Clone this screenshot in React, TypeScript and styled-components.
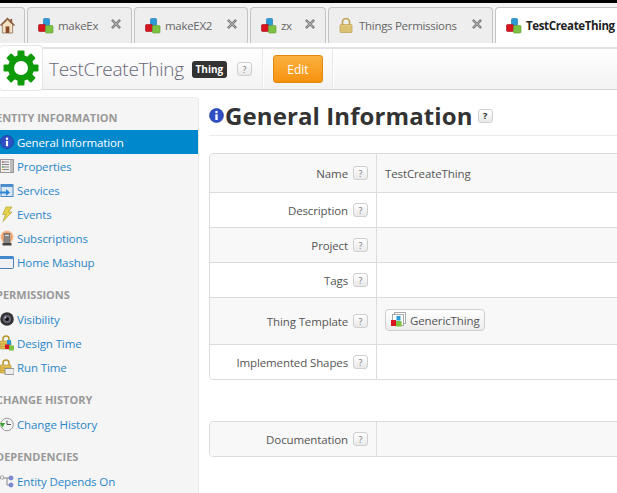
import React from "react";
import styled, { createGlobalStyle } from "styled-components";

const GlobalStyle = createGlobalStyle`
  html, body {
    margin: 0;
    padding: 0;
    background: #fff;
  }
`;

const Page = styled.div`
  width: 617px;
  height: 493px;
  overflow: hidden;
  display: flex;
  flex-direction: column;
  background: #fff;
  font-family: "Open Sans", "Noto Sans", sans-serif;
  font-size: 11.5px;
  color: #444;
`;

const TabBar = styled.div`
  flex: none;
  display: flex;
  gap: 2px;
  height: 36px;
  padding-top: 7px;
  background: linear-gradient(#000 0, #000 3px, #f4f4f4 3px);
`;

const Tab = styled.div<{ $active?: boolean; $width: number }>`
  flex: none;
  box-sizing: border-box;
  width: ${(p) => p.$width}px;
  height: 36px;
  display: flex;
  align-items: center;
  gap: 4px;
  padding: 0 10px 0 10px;
  border: 1px solid #c4c4c4;
  border-bottom: none;
  border-radius: 4px 4px 0 0;
  background: ${(p) => (p.$active ? "#fff" : "#eeeeee")};
  color: ${(p) => (p.$active ? "#222" : "#666")};
  font-weight: ${(p) => (p.$active ? 700 : 400)};
  font-size: 11.5px;
  letter-spacing: ${(p) => (p.$active ? "-0.35px" : "-0.3px")};
  white-space: nowrap;
`;

const HomeTab = styled(Tab)`
  margin-left: -6px;
  padding: 0 0 0 5px;
`;

const TabLabel = styled.span`
  flex: 1;
`;

const CloseMark = styled.span`
  flex: none;
  display: flex;
  margin-top: -3px;
`;

const Toolbar = styled.div`
  flex: none;
  display: flex;
  align-items: center;
  box-sizing: border-box;
  height: 43px;
  margin-top: 4px;
  border-top: 2px solid #e2e2e2;
  border-bottom: 1px solid #d8d8d8;
  background: linear-gradient(#fff, #f2f2f2);
`;

const GearBox = styled.div`
  flex: none;
  box-sizing: border-box;
  width: 44px;
  height: 46px;
  margin: -2px 6px 0 -1px;
  display: flex;
  align-items: center;
  justify-content: center;
  background: #fff;
  border: 1px solid #e6e6e6;
  border-radius: 4px;
`;

const EntityTitle = styled.div`
  font-size: 19px;
  font-weight: 300;
  color: #667;
  letter-spacing: -0.25px;
  white-space: nowrap;
`;

const TypeBadge = styled.div`
  margin-left: 8px;
  width: 35px;
  height: 17px;
  display: flex;
  align-items: center;
  justify-content: center;
  border-radius: 3px;
  background: #333;
  color: #fff;
  font-size: 10px;
  font-weight: 700;
`;

const HelpButton = styled.span<{ $dark?: boolean }>`
  flex: none;
  box-sizing: border-box;
  width: 15px;
  height: 14px;
  display: inline-flex;
  align-items: center;
  justify-content: center;
  border: 1px solid #cfcfcf;
  border-radius: 3px;
  background: linear-gradient(#fff, #e9e9e9);
  color: ${(p) => (p.$dark ? "#222" : "#777")};
  font-size: 9px;
  font-weight: ${(p) => (p.$dark ? 700 : 400)};
  line-height: 1;
`;

const ToolbarHelp = styled(HelpButton)`
  margin-left: 10px;
`;

const ToolbarDivider = styled.div`
  align-self: stretch;
  width: 1px;
  background: #e8e8e8;
  border-right: 1px solid #fff;
`;

const FirstDivider = styled(ToolbarDivider)`
  margin-left: 10px;
`;

const EditButton = styled.div`
  box-sizing: border-box;
  width: 50px;
  height: 28px;
  margin: 0 9px;
  display: flex;
  align-items: center;
  justify-content: center;
  border: 1px solid #e08a10;
  border-radius: 3px;
  background: linear-gradient(#fbb040, #f7920f);
  color: #fff;
  font-size: 12px;
`;

const Main = styled.div`
  flex: 1;
  min-height: 0;
  display: flex;
  margin-top: 7px;
`;

const Sidebar = styled.nav`
  flex: none;
  box-sizing: border-box;
  width: 199px;
  padding-top: 12px;
  background: #f5f5f5;
  border-top: 1px solid #ececec;
  border-right: 1px solid #e8e8e8;
  border-radius: 0 4px 0 0;
`;

const SectionTitle = styled.div`
  height: 16px;
  margin: 0 0 4px -4px;
  line-height: 16px;
  color: #999;
  font-size: 11px;
  font-weight: 700;
  white-space: nowrap;
`;

const NavGroup = styled.div`
  margin-bottom: 13px;
`;

const NavItem = styled.div<{ $selected?: boolean }>`
  height: 24px;
  display: flex;
  align-items: center;
  gap: 3px;
  background: ${(p) => (p.$selected ? "#0088cc" : "transparent")};
  color: ${(p) => (p.$selected ? "#fff" : "#2a86c8")};
  font-size: 11.5px;
  letter-spacing: -0.12px;
  white-space: nowrap;
`;

const NavIcon = styled.span`
  flex: none;
  width: 14px;
  height: 16px;
  display: flex;
  align-items: center;
  justify-content: flex-end;
  overflow: hidden;
`;

const Content = styled.section`
  flex: 1;
  min-width: 0;
  padding-left: 10px;
  overflow: hidden;
`;

const Heading = styled.div`
  box-sizing: border-box;
  height: 39px;
  display: flex;
  align-items: center;
  padding-bottom: 1px;
  border-bottom: 1px solid #eaeaea;
`;

const HeadingText = styled.h1`
  margin: 0 5px 0 1px;
  color: #333;
  font-size: 24px;
  font-weight: 700;
  letter-spacing: 0.1px;
  white-space: nowrap;
`;

const InfoTable = styled.div<{ $top: number }>`
  width: 440px;
  margin-top: ${(p) => p.$top}px;
  border: 1px solid #dcdcdc;
  border-radius: 4px;
  overflow: hidden;
`;

const Row = styled.div<{ $height: number; $shaded?: boolean }>`
  box-sizing: border-box;
  height: ${(p) => p.$height}px;
  display: flex;
  background: ${(p) => (p.$shaded ? "#f8f8f8" : "#fff")};
  border-bottom: 1px solid #dcdcdc;

  &:last-child {
    border-bottom: none;
  }
`;

const LabelCell = styled.div`
  flex: none;
  box-sizing: border-box;
  width: 167px;
  display: flex;
  align-items: center;
  justify-content: flex-end;
  gap: 5px;
  padding-right: 8px;
  border-right: 1px solid #dcdcdc;
  color: #555;
  letter-spacing: -0.12px;
  white-space: nowrap;
`;

const ValueCell = styled.div`
  flex: 1;
  display: flex;
  align-items: center;
  padding-left: 8px;
  color: #555;
  letter-spacing: -0.12px;
`;

const TemplateLink = styled.div`
  box-sizing: border-box;
  height: 22px;
  display: flex;
  align-items: center;
  gap: 4px;
  margin-top: -2px;
  padding: 0 4px;
  border: 1px solid #cfcfcf;
  border-radius: 4px;
  background: linear-gradient(#fff, #ececec);
  color: #555;
`;

const Cubes = ({ size = 16 }: { size?: number }) => (
  <svg width={size} height={size} viewBox="0 0 16 16">
    <rect x="5.5" y="0.5" width="6" height="7" rx="1" fill="#2a9bd8" stroke="#1a6fa8" strokeWidth="0.6" />
    <rect x="0.5" y="6.5" width="7" height="7" rx="1" fill="#d8141f" stroke="#a00c14" strokeWidth="0.6" />
    <rect x="7.5" y="7.5" width="7.5" height="7.5" rx="1" fill="#7cc242" stroke="#5a9a2c" strokeWidth="0.6" />
  </svg>
);

const CloseIcon = () => (
  <svg width="10" height="10" viewBox="0 0 11 11">
    <path d="M2 2 L9 9 M9 2 L2 9" stroke="#808080" strokeWidth="2.8" strokeLinecap="square" />
    <path d="M2 2 L9 9 M9 2 L2 9" stroke="#b4b4b4" strokeWidth="1" />
  </svg>
);

const HomeIcon = () => (
  <svg width="15" height="17" viewBox="0 0 16 18">
    <path d="M2.5 8 L8 3 L13.5 8 V17 H2.5 Z" fill="#f2e2c4" stroke="#8a6a48" strokeWidth="0.8" />
    <path d="M0.5 9 L8 1.5 L15.5 9" fill="none" stroke="#8c5a3a" strokeWidth="1.6" />
    <rect x="6" y="10" width="4" height="7" fill="#8a4a2a" />
    <rect x="11" y="2" width="2" height="4" fill="#8c5a3a" />
  </svg>
);

const LockIcon = () => (
  <svg width="16" height="15" viewBox="0 0 14 15" preserveAspectRatio="xMinYMid meet">
    <path d="M3.5 7 V4 a3.5 3.5 0 0 1 7 0 V7" fill="none" stroke="#c0a050" strokeWidth="1.6" />
    <rect x="1" y="6.5" width="12" height="8" rx="1" fill="#e6cd80" stroke="#b8994a" strokeWidth="0.7" />
    <path d="M1.5 9 H12.5 M1.5 11 H12.5 M1.5 13 H12.5" stroke="#c8ac5c" strokeWidth="0.7" />
  </svg>
);

const GearIcon = () => (
  <svg width="36" height="36" viewBox="0 0 36 36">
    <g fill="#0f9a0a">
      {[0, 45, 90, 135, 180, 225, 270, 315].map((deg) => (
        <rect key={deg} x="14.5" y="0.5" width="7" height="9" rx="1" transform={`rotate(${deg} 18 18)`} />
      ))}
      <circle cx="18" cy="18" r="13" />
    </g>
    <circle cx="18" cy="18" r="7" fill="#fff" />
  </svg>
);

const InfoIcon = ({ size = 14 }: { size?: number }) => (
  <svg width={size} height={size} viewBox="0 0 14 14">
    <circle cx="7" cy="7" r="6.5" fill="#2f4fc4" stroke="#1f3590" strokeWidth="0.6" />
    <circle cx="7" cy="3.8" r="1.2" fill="#fff" />
    <rect x="5.9" y="5.8" width="2.2" height="5.4" fill="#fff" />
  </svg>
);

const PropertiesIcon = () => (
  <svg width="14" height="15" viewBox="0 0 14 15">
    <rect x="0.5" y="0.5" width="13" height="13" fill="#eee" stroke="#999" />
    <rect x="10" y="1" width="3" height="12" fill="#bbb" />
    <path d="M2 3 H9 M2 5.5 H9 M2 8 H9 M2 10.5 H9" stroke="#888" />
    <path d="M2 3 H3.5" stroke="#c33" />
    <path d="M2 8 H3.5" stroke="#3a3" />
    <path d="M2 10.5 H3.5" stroke="#e90" />
  </svg>
);

const ServicesIcon = () => (
  <svg width="14" height="15" viewBox="0 0 14 15">
    <rect x="1" y="1.5" width="12" height="12" fill="#dce9f5" stroke="#4a86c0" />
    <rect x="1" y="1.5" width="12" height="2.5" fill="#4a90d0" />
    <path d="M0 8.5 H6 V6 L10 9.5 L6 13 V10.5 H0 Z" fill="#2f86d6" />
  </svg>
);

const EventsIcon = () => (
  <svg width="14" height="16" viewBox="0 0 14 16">
    <path d="M6 1 H12 L8.5 6 H12 L3 15.5 L5.5 8.5 H2.5 Z" fill="#e6d24a" stroke="#a89a30" strokeWidth="0.6" />
  </svg>
);

const SubscriptionsIcon = () => (
  <svg width="14" height="16" viewBox="0 0 14 16">
    <circle cx="7" cy="7" r="6.5" fill="#f6b888" />
    <circle cx="7" cy="7" r="4.5" fill="#f8d0a8" stroke="#ee9a5a" />
    <rect x="4" y="3.5" width="6" height="10" fill="#888" stroke="#555" strokeWidth="0.5" />
    <rect x="5" y="5" width="4" height="1" fill="#ddd" />
    <rect x="2.5" y="13" width="9" height="2.5" fill="#444" />
  </svg>
);

const MashupIcon = () => (
  <svg width="14" height="13" viewBox="0 0 14 13">
    <rect x="-2" y="0.5" width="15.5" height="12" rx="1" fill="#eef0f4" stroke="#4a80b8" />
    <rect x="-2" y="0.5" width="15.5" height="2.5" fill="#3f8ad0" />
  </svg>
);

const VisibilityIcon = () => (
  <svg width="14" height="14" viewBox="0 0 14 14">
    <circle cx="7" cy="7" r="6.8" fill="#333" />
    <circle cx="7" cy="7" r="4" fill="#667" />
    <circle cx="7" cy="7" r="2" fill="#111" />
    <circle cx="5.5" cy="5.5" r="0.9" fill="#ccd" />
  </svg>
);

const LockBase = () => (
  <>
    <path d="M3 7 V4 a3 3 0 0 1 6 0 V7" fill="none" stroke="#b8962e" strokeWidth="1.5" />
    <rect x="0" y="6" width="11" height="8" rx="1" fill="#e4c25a" stroke="#a88a2a" strokeWidth="0.6" />
    <path d="M0.5 9 H10.5 M0.5 11.5 H10.5" stroke="#b8962e" strokeWidth="0.7" />
  </>
);

const DesignTimeIcon = () => (
  <svg width="14" height="16" viewBox="0 0 14 16">
    <LockBase />
    <rect x="7" y="5" width="4" height="5" fill="#2a9bd8" />
    <rect x="5" y="9.5" width="4.5" height="4.5" fill="#d8141f" />
    <rect x="9" y="10.5" width="5" height="5" fill="#7cc242" />
  </svg>
);

const RunTimeIcon = () => (
  <svg width="14" height="16" viewBox="0 0 14 16">
    <LockBase />
    <rect x="5" y="9.5" width="9" height="6" fill="#eee" stroke="#777" strokeWidth="0.7" />
  </svg>
);

const HistoryIcon = () => (
  <svg width="14" height="15" viewBox="0 0 14 15">
    <circle cx="7" cy="7.5" r="6.3" fill="#f4f4f4" stroke="#999" />
    <path d="M7 3.5 V7.5 H11" fill="none" stroke="#555" />
    <path d="M0 6 H5 L2.5 10.5 Z" fill="#2fa82a" />
  </svg>
);

const DependsIcon = () => (
  <svg width="14" height="15" viewBox="0 0 14 15">
    <path d="M3 4 H7 V11 H10 M7 4 H10" fill="none" stroke="#888" />
    <rect x="0.5" y="2" width="3" height="3" rx="1" fill="#fff" stroke="#999" />
    <circle cx="11" cy="4" r="2" fill="#7f8fd8" stroke="#4a5ab0" strokeWidth="0.6" />
    <circle cx="11" cy="11" r="2" fill="#7f8fd8" stroke="#4a5ab0" strokeWidth="0.6" />
  </svg>
);

const TemplateIcon = () => (
  <svg width="16" height="16" viewBox="0 0 16 16">
    <rect x="4.5" y="0.5" width="11" height="11" fill="#fff" stroke="#aaa" />
    <rect x="2.5" y="2.5" width="11" height="11" fill="#fff" stroke="#aaa" />
    <rect x="6.5" y="4" width="4" height="4.5" fill="#2a9bd8" />
    <rect x="1" y="8" width="5" height="6" fill="#d8141f" />
    <rect x="6" y="9" width="5.5" height="5.5" fill="#7cc242" />
  </svg>
);

type NavEntry = { label: string; icon: React.ReactNode; selected?: boolean };

const navGroups: { title: string; items: NavEntry[] }[] = [
  {
    title: "ENTITY INFORMATION",
    items: [
      { label: "General Information", icon: <InfoIcon />, selected: true },
      { label: "Properties", icon: <PropertiesIcon /> },
      { label: "Services", icon: <ServicesIcon /> },
      { label: "Events", icon: <EventsIcon /> },
      { label: "Subscriptions", icon: <SubscriptionsIcon /> },
      { label: "Home Mashup", icon: <MashupIcon /> },
    ],
  },
  {
    title: "PERMISSIONS",
    items: [
      { label: "Visibility", icon: <VisibilityIcon /> },
      { label: "Design Time", icon: <DesignTimeIcon /> },
      { label: "Run Time", icon: <RunTimeIcon /> },
    ],
  },
  {
    title: "CHANGE HISTORY",
    items: [{ label: "Change History", icon: <HistoryIcon /> }],
  },
  {
    title: "DEPENDENCIES",
    items: [{ label: "Entity Depends On", icon: <DependsIcon /> }],
  },
];

const tabs = [
  { label: "makeEx", width: 105, icon: <Cubes /> },
  { label: "makeEX2", width: 114, icon: <Cubes /> },
  { label: "zx", width: 76, icon: <Cubes /> },
  { label: "Things Permissions", width: 165, icon: <LockIcon /> },
];

const App = () => (
  <Page>
    <GlobalStyle />
    <TabBar>
      <HomeTab $width={31}>
        <HomeIcon />
      </HomeTab>
      {tabs.map((tab) => (
        <Tab key={tab.label} $width={tab.width}>
          {tab.icon}
          <TabLabel>{tab.label}</TabLabel>
          <CloseMark>
            <CloseIcon />
          </CloseMark>
        </Tab>
      ))}
      <Tab $active $width={140}>
        <Cubes />
        <TabLabel>TestCreateThing</TabLabel>
      </Tab>
    </TabBar>
    <Toolbar>
      <GearBox>
        <GearIcon />
      </GearBox>
      <EntityTitle>TestCreateThing</EntityTitle>
      <TypeBadge>Thing</TypeBadge>
      <ToolbarHelp>?</ToolbarHelp>
      <FirstDivider />
      <EditButton>Edit</EditButton>
      <ToolbarDivider />
    </Toolbar>
    <Main>
      <Sidebar>
        {navGroups.map((group) => (
          <NavGroup key={group.title}>
            <SectionTitle>{group.title}</SectionTitle>
            {group.items.map((item) => (
              <NavItem key={item.label} $selected={item.selected}>
                <NavIcon>{item.icon}</NavIcon>
                {item.label}
              </NavItem>
            ))}
          </NavGroup>
        ))}
      </Sidebar>
      <Content>
        <Heading>
          <InfoIcon size={15} />
          <HeadingText>General Information</HeadingText>
          <HelpButton $dark>?</HelpButton>
        </Heading>
        <InfoTable $top={17}>
          <Row $height={39} $shaded>
            <LabelCell>
              Name <HelpButton>?</HelpButton>
            </LabelCell>
            <ValueCell>TestCreateThing</ValueCell>
          </Row>
          <Row $height={35}>
            <LabelCell>
              Description <HelpButton>?</HelpButton>
            </LabelCell>
            <ValueCell />
          </Row>
          <Row $height={35} $shaded>
            <LabelCell>
              Project <HelpButton>?</HelpButton>
            </LabelCell>
            <ValueCell />
          </Row>
          <Row $height={35}>
            <LabelCell>
              Tags <HelpButton>?</HelpButton>
            </LabelCell>
            <ValueCell />
          </Row>
          <Row $height={47} $shaded>
            <LabelCell>
              Thing Template <HelpButton>?</HelpButton>
            </LabelCell>
            <ValueCell>
              <TemplateLink>
                <TemplateIcon />
                GenericThing
              </TemplateLink>
            </ValueCell>
          </Row>
          <Row $height={34}>
            <LabelCell>
              Implemented Shapes <HelpButton>?</HelpButton>
            </LabelCell>
            <ValueCell />
          </Row>
        </InfoTable>
        <InfoTable $top={41}>
          <Row $height={34} $shaded>
            <LabelCell>
              Documentation <HelpButton>?</HelpButton>
            </LabelCell>
            <ValueCell />
          </Row>
        </InfoTable>
      </Content>
    </Main>
  </Page>
);

export default App;
